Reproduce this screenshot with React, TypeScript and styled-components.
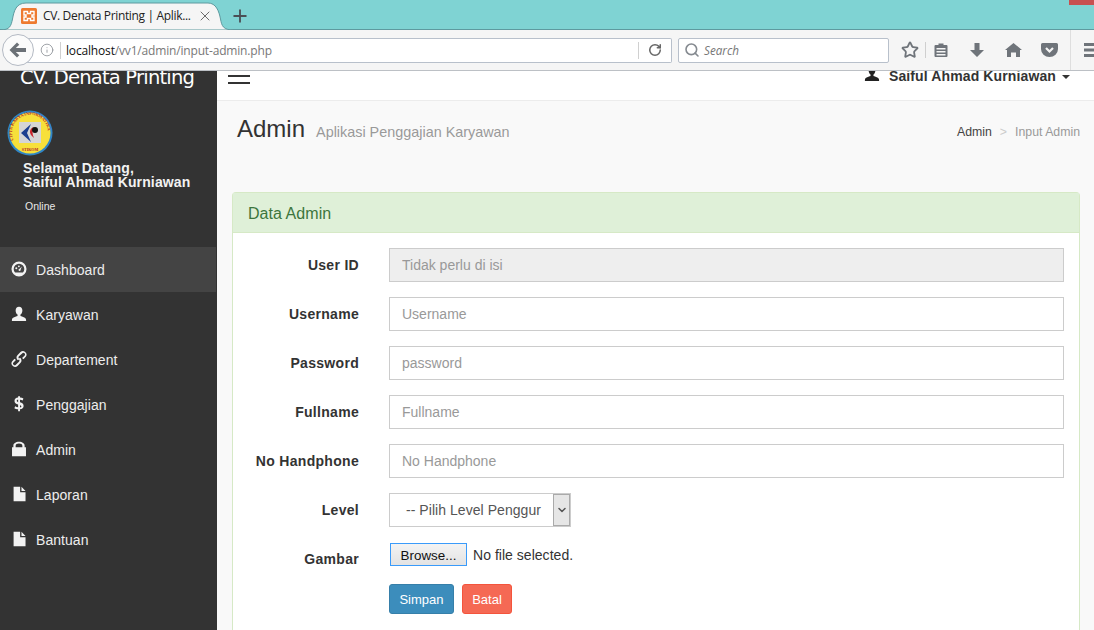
import React from "react";
import styled, { createGlobalStyle } from "styled-components";
import { Plus, X, Info, RotateCw, Search as SearchIcon, Star, ChevronDown } from "lucide-react";

const Global = createGlobalStyle`
  html, body { margin: 0; padding: 0; height: 630px; overflow: hidden; background: #333; }
  * { box-sizing: border-box; }
  body { font-family: "Liberation Sans", Arial, sans-serif; font-size: 14px; color: #333; }
`;

const Page = styled.div`width: 1094px; height: 630px; display: flex; flex-direction: column; overflow: hidden;`;

const TabBar = styled.div`
  height: 30px; flex: none; background: #7fd3d3; border-bottom: 1px solid #5e9a9f;
  display: flex; align-items: flex-end; padding-left: 10px; position: relative;
`;
const Tab = styled.div`
  width: 214px; height: 28px; margin-bottom: -1px; position: relative;
  display: flex; align-items: center; padding: 0 0 1px 11px; font: 12px "Open Sans", sans-serif; letter-spacing: -0.34px; color: #222;
`;
const TabShape = styled.svg`position: absolute; left: 0; top: 0; width: 214px; height: 28px; overflow: visible;`;
const TabIcon = styled.svg`width: 16px; height: 16px; flex: none; position: relative;`;
const TabTitle = styled.span`margin-left: 6px; width: 149px; white-space: nowrap; position: relative;`;
const TabClose = styled.span`display: flex; color: #555; position: relative; margin-left: 5px;`;
const NewTab = styled.span`display: flex; color: #4a4f55; margin: 2px 0 0 6px; align-self: center;`;
const WinClose = styled.div`position: absolute; right: 0; top: 0; width: 25px; height: 5px; background: #c75050;`;

const ToolBar = styled.div`
  height: 41px; flex: none; background: #f5f5f5; border-bottom: 1px solid #bcc0c5;
  display: flex; align-items: center; position: relative; padding-left: 18px; overflow: hidden;
`;
const BackButton = styled.div`
  position: absolute; left: 2px; top: 4px; width: 32px; height: 32px; border-radius: 50%;
  background: #fbfbfb; border: 1px solid #b4bac4; display: flex; align-items: center; justify-content: center; color: #6c7177;
`;
const UrlBar = styled.div`
  flex: none; width: 654px; height: 25px; background: #fff; border: 1px solid #b8c0cb; border-left: none; border-radius: 0 2px 2px 0;
  display: flex; align-items: center; padding-left: 22px; font: 12px "Open Sans", sans-serif; letter-spacing: -0.17px; color: #777;
`;
const InfoWrap = styled.span`display: flex; color: #8a8f95; width: 15px;`;
const Divider = styled.span`width: 1px; height: 17px; background: #d0d0d0; margin: 0 5px 0 5px;`;
const UrlHost = styled.span`color: #111;`;
const UrlPath = styled.span`flex: 1; white-space: nowrap;`;
const ReloadCell = styled.span`width: 33px; height: 17px; border-left: 1px solid #d0d0d0; display: flex; align-items: center; justify-content: center; color: #666;`;
const SearchBox = styled.div`
  flex: none; width: 211px; height: 25px; margin: 0 0 0 6px; background: #fff; border: 1px solid #b8c0cb; border-radius: 2px;
  display: flex; align-items: center; padding-left: 5px; gap: 4px; color: #777; font: italic 11.7px "Open Sans", sans-serif;
`;
const SearchGlyph = styled.span`display: flex; color: #858a90;`;
const ToolIcons = styled.div`flex: none; display: flex; align-items: center; margin-left: 11px; height: 100%; color: #6f747a;`;
const ToolCell = styled.span<{ $w: number; $after?: number }>`
  width: ${p => p.$w}px; margin-right: ${p => p.$after ?? 0}px; display: flex; justify-content: center; align-items: center;
`;
const ToolSep = styled.span`width: 1px; height: 16px; background: #cfcfcf;`;
const ToolSepTall = styled.span`width: 1px; height: 40px; flex: none; background: #dedede; margin: 0 13px 0 0;`;

const Body = styled.div`flex: 1; min-height: 0; display: flex;`;
const Sidebar = styled.aside`width: 217px; flex: none; background: #333; display: flex; flex-direction: column; overflow: hidden;`;
const Brand = styled.div`
  height: 33px; flex: none; padding: 0 0 0 20px;
  font: 19.5px/13px "DejaVu Sans", sans-serif; letter-spacing: -0.78px; color: #fff; white-space: nowrap;
`;
const Logo = styled.svg`width: 46px; height: 46px; margin: 6px 0 0 7px; flex: none; display: block;`;
const Welcome = styled.div`
  margin: 5px 0 0 23px; font-weight: bold; font-size: 14px; line-height: 14px; letter-spacing: 0.14px; color: #f2f2f2; white-space: nowrap;
`;
const Status = styled.div`margin: 10px 0 0 25px; font-size: 10.5px; line-height: 14px; color: #e8e8e8;`;
const Nav = styled.nav`margin-top: 34px; display: flex; flex-direction: column;`;
const NavItem = styled.div<{ $active?: boolean }>`
  height: 45px; width: 216px; display: flex; align-items: center; padding-left: 10px; color: #ededed; letter-spacing: 0.05px;
  background: ${p => (p.$active ? "#444" : "transparent")};
`;
const NavIcon = styled.svg`width: 18px; height: 18px; flex: none; margin-right: 8px; margin-top: -2px; fill: #f2f2f2;`;

const Main = styled.main`flex: 1; min-width: 0; background: #f9f9f9; display: flex; flex-direction: column; overflow: hidden;`;
const TopBar = styled.header`
  height: 30px; flex: none; background: #fff; border-bottom: 1px solid #ececec; display: flex; justify-content: space-between;
  padding: 0 24px 0 11px; overflow: hidden;
`;
const Burger = styled.div`
  width: 22px; height: 9px; margin-top: 4px; border-top: 2px solid #333; border-bottom: 2px solid #333;
`;
const UserMenu = styled.div`display: flex; align-items: center; height: 11px; font-weight: bold; color: #333;`;
const UserIcon = styled.svg`width: 18px; height: 18px; fill: #222; margin: -6px 8px 0 0;`;
const UserName = styled.span`letter-spacing: 0.12px; line-height: 11px; white-space: nowrap;`;
const Caret = styled.span`width: 0; height: 0; margin-left: 6px; border: 4px solid transparent; border-top-color: #333; border-bottom: none;`;
const ContentHeader = styled.div`height: 91px; flex: none; display: flex; justify-content: space-between; padding: 15px 14px 0 20px;`;
const Title = styled.h1`margin: 0; font-weight: 400; font-size: 24px; line-height: 26px; color: #333; display: flex; align-items: baseline; white-space: nowrap;`;
const Subtitle = styled.small`margin-left: 11px; font-size: 14.4px; color: #999;`;
const Crumbs = styled.div`font-size: 12.3px; color: #999; margin-top: 9px; display: flex; gap: 8px; white-space: nowrap;`;
const CrumbLink = styled.span`color: #444;`;
const CrumbSep = styled.span`color: #ccc;`;

const Panel = styled.section`
  margin: 0 14px 0 15px; flex: 1; background: #fff; border: 1px solid #d6e9c6; border-bottom: none; border-radius: 4px 4px 0 0;
`;
const PanelHead = styled.div`
  height: 40px; background: #dff0d8; border-bottom: 1px solid #d6e9c6; padding: 2px 15px 0; display: flex; align-items: center;
  color: #3c763d; font-size: 16px; letter-spacing: 0.05px;
`;
const Form = styled.form`padding: 15px 15px 0 0; display: flex; flex-direction: column; gap: 15px;`;
const Row = styled.div`display: grid; grid-template-columns: 126px 1fr; column-gap: 30px; min-height: 34px;`;
const Label = styled.label`
  text-align: right; font-weight: bold; letter-spacing: 0.3px; line-height: 34px; color: #333; white-space: nowrap;
`;
const Input = styled.input`
  width: 100%; height: 34px; border: 1px solid #ccc; padding: 6px 12px; font: 14px "Liberation Sans", sans-serif; color: #555; background: #fff; outline: none;
  &::placeholder { color: #999; opacity: 1; }
  &:disabled { background: #eee; }
`;
const SelectWrap = styled.div`
  width: 182px; height: 34px; border: 1px solid #ccc; background: #fff; display: flex; align-items: center; justify-content: space-between;
  color: #555; padding-left: 16px; letter-spacing: 0.05px; white-space: nowrap;
`;
const SelectArrow = styled.span`
  width: 17px; height: 32px; flex: none; background: #e6e6e6; border: 1px solid #aaa; display: flex; align-items: center; justify-content: center; color: #555;
`;
const FileRow = styled.div`display: flex; align-items: flex-start; height: 35px; padding: 1px 0 0 1px; color: #333;`;
const Browse = styled.button`
  width: 77px; height: 23px; margin-right: 6px; padding: 2px 0 0; border: 1px solid #3a9bfa; background: linear-gradient(#f3f3f3, #e3e3e3); color: #111; font: 13.4px "Liberation Sans", sans-serif;
`;
const FileText = styled.span`line-height: 25px; letter-spacing: 0.03px; white-space: nowrap;`;
const Actions = styled.div`display: flex; gap: 8px; margin-top: -8px;`;
const Btn = styled.button<{ $bg: string; $border: string; $w: number }>`
  width: ${p => p.$w}px; height: 30px; padding: 0; border-radius: 3px; font: 13px "Liberation Sans", sans-serif; color: #fff;
  background: ${p => p.$bg}; border: 1px solid ${p => p.$border};
`;

const iconPaths: Record<string, React.ReactNode> = {
  dash: <path fillRule="evenodd" d="M8 1.300a6.700 6.700 0 1 0 0 13.400 6.700 6.700 0 0 0 0-13.400zm0 2a4.700 4.700 0 0 1 4.700 4.700c0 1.200-.4 2.200-1.200 3.200h-7A4.600 4.600 0 0 1 3.300 8 4.700 4.700 0 0 1 8 3.300zM5.600 6.500a.9.9 0 1 0 0 1.800.9.900 0 0 0 0-1.800zm2.300-1.700a.800.800 0 1 0 0 1.600.800.800 0 0 0 0-1.600zm2.700.900L8.500 7.700a1 1 0 1 0 1 .6z" />,
  user: <path d="M8 1.500c-1.900 0-3 1.400-3 3.300 0 1.500.7 3 1.700 3.700v1.300c-1.600.6-5 1.300-5 3.500v1h12.600v-1c0-2.200-3.400-2.900-5-3.500V8.500c1-.7 1.700-2.200 1.700-3.700 0-1.900-1.100-3.300-3-3.300z" />,
  link: <path d="M9.300 1.800a3.200 3.200 0 0 1 4.900 4L12 8.300l-1.300-1.200L12.900 5a1.400 1.400 0 0 0-2.100-2L8 5.600a1.400 1.400 0 0 0 .4 2.300l-1.300 1.300c-1.500-1-1.800-3.200-.5-4.600zM6.700 14.200a3.200 3.200 0 0 1-4.900-4L4 7.700l1.300 1.200L3.100 11a1.400 1.400 0 0 0 2.100 2L8 10.400a1.400 1.400 0 0 0-.4-2.300l1.300-1.300c1.500 1 1.800 3.200.5 4.600z" />,
  usd: <path fillRule="evenodd" d="M7.200 1h1.700v1.300c1.200.1 2.200.4 3 .8l-.6 1.800c-.8-.4-1.500-.6-2.400-.7v2.300c2 .6 3.200 1.400 3.200 3.200 0 1.700-1.200 2.800-3.200 3V14.500H7.200v-1.800c-1.300-.1-2.500-.5-3.300-1l.7-1.800c.8.500 1.700.8 2.600.9V8.400C5.200 7.800 4 7 4 5.300c0-1.600 1.200-2.800 3.200-3zm0 3.100c-.8.100-1.200.6-1.200 1.100 0 .6.400.9 1.200 1.200zm1.700 4.900v2.200c.8-.1 1.200-.5 1.200-1.100s-.4-.9-1.200-1.100z" />,
  lock: <path fillRule="evenodd" d="M3 6.500V5C3 3 5 1.500 8 1.500S13 3 13 5v1.500h1.200v8H1.800v-8zm2 0h6V5.200C11 4 9.700 3.200 8 3.200S5 4 5 5.200z" />,
  file: <path d="M3.200 1.500h5.800v5h4.800v8H3.200zM10.200 1.500l3.600 3.800h-3.600z" />,
};

const Icon = ({ name }: { name: string }) => <NavIcon viewBox="0 0 16 16">{iconPaths[name]}</NavIcon>;

const nav = [
  ["dash", "Dashboard"], ["user", "Karyawan"], ["link", "Departement"], ["usd", "Penggajian"],
  ["lock", "Admin"], ["file", "Laporan"], ["file", "Bantuan"],
];

export default function App() {
  return (
    <Page>
      <Global />
      <TabBar>
        <Tab>
          <TabShape viewBox="0 0 214 28">
            <path d="M-10 28c10 0 11-4 12.500-11C4 9 6 1 16 1h182c8 0 11 8 12.500 16 1.300 7 2.500 11 13.500 11z" fill="#f5f5f5" stroke="#5e9a9f" />
          </TabShape>
          <TabIcon viewBox="0 0 16 16">
            <rect width="16" height="16" rx="1.500" fill="#ee7a2f" />
            <path d="M3 3.500h3.500v2H9.500v-2H13v3.500h-2v2h2v3.500H9.500v-2h-3v2H3V9h2V7H3z" fill="none" stroke="#fff" strokeWidth="1.400" />
          </TabIcon>
          <TabTitle>CV. Denata Printing | Aplik...</TabTitle>
          <TabClose><X size={16} strokeWidth={1.3} /></TabClose>
        </Tab>
        <NewTab><Plus size={20} strokeWidth={2.2} /></NewTab>
        <WinClose />
      </TabBar>
      <ToolBar>
        <BackButton>
          <svg width="18" height="16" viewBox="0 0 18 16" fill="currentColor"><path d="M8 0.500 10.300 2.800 6.800 6H17v4H6.800l3.500 3.200L8 15.500 0.500 8z" /></svg>
        </BackButton>
        <UrlBar>
          <InfoWrap><Info size={14} strokeWidth={1.4} /></InfoWrap>
          <Divider />
          <UrlPath><UrlHost>localhost</UrlHost>/vv1/admin/input-admin.php</UrlPath>
          <ReloadCell><RotateCw size={14} strokeWidth={2.6} /></ReloadCell>
        </UrlBar>
        <SearchBox><SearchGlyph><SearchIcon size={16} strokeWidth={2.4} /></SearchGlyph><span>Search</span></SearchBox>
        <ToolIcons>
          <ToolCell $w={20} $after={5}><Star size={18} strokeWidth={2.4} /></ToolCell>
          <ToolSep />
          <ToolCell $w={30}>
            <svg width="16" height="16" viewBox="0 0 16 16" fill="currentColor"><path fillRule="evenodd" d="M2.500 3H5.500V1.500h5V3h3A1 1 0 0 1 14.500 4v10a1 1 0 0 1-1 1h-11a1 1 0 0 1-1-1V4a1 1 0 0 1 1-1zM3.500 6v1.500h9V6zm0 3v1.500h9V9zm0 3v1.500h9V12z" /></svg>
          </ToolCell>
          <ToolCell $w={42}><svg width="16" height="16" viewBox="0 0 16 16" fill="currentColor"><path d="M5.500 1h5v7H15l-7 7-7-7h4.500z" /></svg></ToolCell>
          <ToolCell $w={30}><svg width="17" height="16" viewBox="0 0 17 16" fill="currentColor"><path d="M8.500 1 17 8h-2v7h-4v-4.500H6V15H2V8H0z" /></svg></ToolCell>
          <ToolCell $w={42}><svg width="17" height="16" viewBox="0 0 17 16"><path d="M1.500 1h14A1.500 1.500 0 0 1 17 2.500V7a8.500 8 0 0 1-17 0V2.500A1.500 1.500 0 0 1 1.500 1z" fill="currentColor" /><path d="m5 6 3.500 3.500L12 6" fill="none" stroke="#f5f5f5" strokeWidth="2.200" /></svg></ToolCell>
          <ToolSepTall />
          <svg width="12" height="16" viewBox="0 0 12 16" fill="currentColor" style={{ flex: "none" }}><path d="M0 1h12v3H0zM0 6.500h12v3H0zM0 12h12v3H0z" /></svg>
        </ToolIcons>
      </ToolBar>
      <Body>
        <Sidebar>
          <Brand>CV. Denata Printing</Brand>
          <Logo viewBox="0 0 46 46">
            <defs><path id="ring" d="M6.500 30a18 18 0 1 1 33 0" /></defs>
            <circle cx="23" cy="23" r="22.500" fill="#2f86c8" />
            <circle cx="23" cy="23" r="20.500" fill="#f7e03a" />
            <text fontSize="4.300" fontWeight="bold" fill="#b3262a" fontFamily="Liberation Serif, serif"><textPath href="#ring">CIPTA KARYA INFORMATIKA</textPath></text>
            <rect x="12" y="12" width="22" height="21" fill="#d5d5d5" />
            <path d="M24 14 14 23l10 9-4-9z" fill="#1c3f8f" />
            <path d="M27 17c-4 1-5 5-3 8l3 3c-2-4-2-8 0-11z" fill="#c8232a" />
            <circle cx="28" cy="20" r="3" fill="#111" />
            <text x="23" y="41" fontSize="4" fontWeight="bold" fill="#b3262a" textAnchor="middle" fontFamily="Liberation Serif, serif">STIKOM</text>
          </Logo>
          <Welcome>Selamat Datang,<br />Saiful Ahmad Kurniawan</Welcome>
          <Status>Online</Status>
          <Nav>
            {nav.map(([icon, label], i) => (
              <NavItem key={label} $active={i === 0}><Icon name={icon} />{label}</NavItem>
            ))}
          </Nav>
        </Sidebar>
        <Main>
          <TopBar>
            <Burger />
            <UserMenu>
              <UserIcon viewBox="0 0 16 16">{iconPaths.user}</UserIcon>
              <UserName>Saiful Ahmad Kurniawan</UserName>
              <Caret />
            </UserMenu>
          </TopBar>
          <ContentHeader>
            <Title>Admin<Subtitle>Aplikasi Penggajian Karyawan</Subtitle></Title>
            <Crumbs><CrumbLink>Admin</CrumbLink><CrumbSep>&gt;</CrumbSep><span>Input Admin</span></Crumbs>
          </ContentHeader>
          <Panel>
            <PanelHead>Data Admin</PanelHead>
            <Form>
              <Row><Label>User ID</Label><Input disabled placeholder="Tidak perlu di isi" /></Row>
              <Row><Label>Username</Label><Input placeholder="Username" /></Row>
              <Row><Label>Password</Label><Input placeholder="password" /></Row>
              <Row><Label>Fullname</Label><Input placeholder="Fullname" /></Row>
              <Row><Label>No Handphone</Label><Input placeholder="No Handphone" /></Row>
              <Row>
                <Label>Level</Label>
                <SelectWrap>-- Pilih Level Penggur<SelectArrow><ChevronDown size={12} strokeWidth={3} /></SelectArrow></SelectWrap>
              </Row>
              <Row>
                <Label>Gambar</Label>
                <FileRow><Browse type="button">Browse...</Browse><FileText>No file selected.</FileText></FileRow>
              </Row>
              <Row>
                <span />
                <Actions>
                  <Btn type="button" $w={65} $bg="#3c8dbc" $border="#367fa9">Simpan</Btn>
                  <Btn type="button" $w={50} $bg="#f56954" $border="#f4543c">Batal</Btn>
                </Actions>
              </Row>
            </Form>
          </Panel>
        </Main>
      </Body>
    </Page>
  );
}
